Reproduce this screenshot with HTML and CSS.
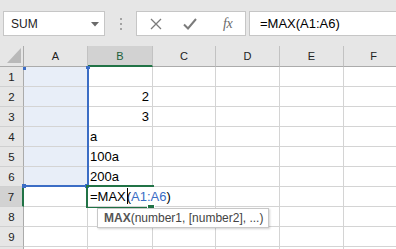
FILE: index.html
```html
<!DOCTYPE html>
<html>
<head>
<meta charset="utf-8">
<link rel="stylesheet" href="styles.css">
</head>
<body>
<div class="topbar">
  <div class="namebox">
    <span>SUM</span>
    <svg class="dd" width="8" height="5" viewBox="0 0 8 5"><polygon points="0,0 8,0 4,4.5" fill="#6a6a6a"/></svg>
  </div>
  <div class="grip"><i></i><i></i><i></i></div>
  <div class="fxbox">
    <svg class="ic-x" width="12" height="12" viewBox="0 0 12 12"><path d="M1 1 L11 11 M11 1 L1 11" stroke="#7b7b7b" stroke-width="1.3" fill="none"/></svg>
    <svg class="ic-ok" width="14" height="12" viewBox="0 0 14 12"><path d="M1 6.5 L5 10.5 L13 1" stroke="#7b7b7b" stroke-width="2" fill="none"/></svg>
    <span class="fx">fx</span>
  </div>
  <div class="formula">=MAX(A1:A6)</div>
</div>

<div class="sheet">
  <div class="corner"><svg width="24" height="20" viewBox="0 0 24 20"><polygon points="21,2 21,17 7,17" fill="#b9b9b9"/></svg></div>
  <div class="h">A</div><div class="h sel">B</div><div class="h">C</div><div class="h">D</div><div class="h">E</div><div class="h">F</div>

  <div class="r">1</div><div class="c ref"></div><div class="c"></div><div class="c"></div><div class="c"></div><div class="c"></div><div class="c"></div>
  <div class="r">2</div><div class="c ref"></div><div class="c num">2</div><div class="c"></div><div class="c"></div><div class="c"></div><div class="c"></div>
  <div class="r">3</div><div class="c ref"></div><div class="c num">3</div><div class="c"></div><div class="c"></div><div class="c"></div><div class="c"></div>
  <div class="r">4</div><div class="c ref"></div><div class="c">a</div><div class="c"></div><div class="c"></div><div class="c"></div><div class="c"></div>
  <div class="r">5</div><div class="c ref"></div><div class="c">100a</div><div class="c"></div><div class="c"></div><div class="c"></div><div class="c"></div>
  <div class="r">6</div><div class="c ref"></div><div class="c">200a</div><div class="c"></div><div class="c"></div><div class="c"></div><div class="c"></div>
  <div class="r rsel">7</div><div class="c"></div><div class="c edit"><span class="etext">=MAX<span class="caret"></span>(<span class="refc">A1:A6</span>)</span></div><div class="c"></div><div class="c"></div><div class="c"></div><div class="c"></div>
  <div class="r">8</div><div class="c"></div><div class="c"></div><div class="c"></div><div class="c"></div><div class="c"></div><div class="c"></div>
  <div class="r">9</div><div class="c"></div><div class="c"></div><div class="c"></div><div class="c"></div><div class="c"></div><div class="c"></div>
  <div class="r"></div><div class="c"></div><div class="c"></div><div class="c"></div><div class="c"></div><div class="c"></div><div class="c"></div>

  <div class="refbox"></div>
  <div class="hd hd-tl"></div><div class="hd hd-tr"></div><div class="hd hd-bl"></div><div class="hd hd-br"></div>
  <div class="active"></div>
  <div class="fillh"></div>
  <div class="tip"><b>MAX</b>(number1, [number2], ...)</div>
</div>
</body>
</html>
```
FILE: styles.css
```css
html, body {
  margin: 0;
  padding: 0;
}
body {
  width: 396px;
  height: 249px;
  overflow: hidden;
  background: #fff;
  font-family: "Liberation Sans", Arial, sans-serif;
  color: #000;
}

/* formula bar */
.topbar {
  display: flex;
  height: 46px;
  box-sizing: border-box;
  padding: 11px 0 0 3px;
  background: #e6e6e6;
}
.namebox {
  width: 102px;
  height: 25px;
  box-sizing: border-box;
  border: 1px solid #c6c6c6;
  background: #fff;
  display: flex;
  align-items: center;
  justify-content: space-between;
  padding: 0 5px 0 7px;
  font-size: 12px;
  color: #222;
}
.dd { display: block; margin-top: 1px; }
.grip {
  width: 31px;
  height: 25px;
  display: flex;
  flex-direction: column;
  align-items: center;
  justify-content: center;
  gap: 3px;
}
.grip i {
  display: block;
  width: 2px;
  height: 2px;
  background: #a3a3a3;
}
.fxbox {
  width: 110px;
  height: 25px;
  box-sizing: border-box;
  border: 1px solid #c6c6c6;
  background: #fff;
  display: flex;
  align-items: center;
}
.ic-x { display: block; margin-left: 13px; }
.ic-ok { display: block; margin-left: 21px; }
.fx {
  margin-left: 26px;
  font-family: "Liberation Serif", "Times New Roman", serif;
  font-style: italic;
  font-size: 14px;
  color: #6a6a6a;
  letter-spacing: -0.5px;
}
.formula {
  flex: 1;
  margin-left: 3px;
  margin-right: -6px;
  height: 25px;
  box-sizing: border-box;
  border: 1px solid #c6c6c6;
  background: #fff;
  padding-left: 10px;
  font-size: 13px;
  line-height: 23px;
  color: #000;
}

/* sheet */
.sheet {
  position: relative;
  display: grid;
  grid-template-columns: 24px 64px 65px 63px 64px 64px 60px;
  grid-template-rows: 21px repeat(10, 20px);
}
.corner {
  background: #e6e6e6;
  border-right: 1px solid #ababab;
  border-bottom: 1px solid #ababab;
  box-sizing: border-box;
}
.corner svg { display: block; }
.h {
  background: #e6e6e6;
  border-right: 1px solid #c2c2c2;
  border-bottom: 1px solid #ababab;
  box-sizing: border-box;
  text-align: center;
  font-size: 11px;
  line-height: 21px;
  color: #222;
}
.h.sel {
  background: #d2d2d2;
  border-bottom: 2px solid #217346;
  color: #1d5e3a;
}
.r {
  background: #e6e6e6;
  border-right: 1px solid #ababab;
  border-bottom: 1px solid #d0d0d0;
  box-sizing: border-box;
  text-align: center;
  font-size: 11.5px;
  line-height: 20px;
  color: #222;
}
.r.rsel {
  background: #d2d2d2;
  border-right: 2px solid #217346;
}
.c {
  border-right: 1px solid #d4d4d4;
  border-bottom: 1px solid #d4d4d4;
  box-sizing: border-box;
  font-size: 13px;
  line-height: 19px;
  padding: 0 2px;
  white-space: nowrap;
}
.c.ref { background: #e8eef8; }
.c.num { text-align: right; padding-right: 3px; }
.edit { position: relative; z-index: 2; }
.etext {
  display: inline-block;
  background: #fff;
  padding-right: 2px;
}
.refc { color: #3a6cc4; }
.caret {
  display: inline-block;
  width: 1px;
  height: 16px;
  background: #000;
  vertical-align: -3px;
  margin-right: -1px;
  margin-left: 1px;
}

/* overlays */
.refbox {
  position: absolute;
  left: 23px;
  top: 20px;
  width: 66px;
  height: 121px;
  box-sizing: border-box;
  border-right: 2px solid #3b6dc5;
  border-bottom: 2px solid #3b6dc5;
}
.hd {
  position: absolute;
  width: 4px;
  height: 4px;
  background: #3b6dc5;
}
.hd-tl { left: 23px; top: 21px; width: 3px; height: 3px; }
.hd-tr { left: 86px; top: 20px; width: 4px; height: 3px; }
.hd-bl { left: 22px; top: 138px; }
.hd-br { left: 85px; top: 138px; }
.active {
  position: absolute;
  left: 86px;
  top: 139px;
  width: 68px;
  height: 23px;
  box-sizing: border-box;
  border: 2px solid #217346;
  z-index: 1;
}
.fillh {
  position: absolute;
  left: 147px;
  top: 158px;
  width: 8px;
  height: 7px;
  box-sizing: border-box;
  border: 1px solid #fff;
  background: #217346;
  z-index: 3;
}
.tip {
  position: absolute;
  left: 97px;
  top: 162px;
  width: 172px;
  height: 20px;
  box-sizing: border-box;
  border: 1px solid #c8c8c8;
  background: #fff;
  box-shadow: 1px 1px 2px rgba(0, 0, 0, 0.18);
  padding-left: 6px;
  font-size: 12px;
  line-height: 18px;
  color: #444;
  white-space: nowrap;
  z-index: 4;
}
.tip b { color: #555; }
```
